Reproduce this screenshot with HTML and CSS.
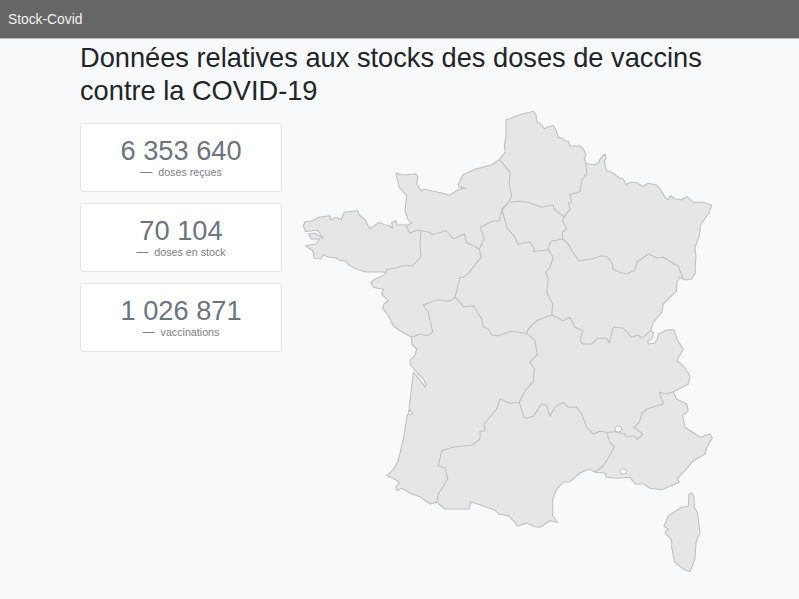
FILE: index.html
```html
<!DOCTYPE html>
<html lang="fr">
<head>
<meta charset="utf-8">
<title>Stock-Covid</title>
<link rel="stylesheet" href="styles.css">
</head>
<body>
<nav class="navbar"><span class="brand">Stock-Covid</span></nav>
<main class="main">
  <h1 class="title">Données relatives aux stocks des doses de vaccins contre la COVID-19</h1>
  <div class="content">
    <section class="stats">
      <div class="card"><div class="value">6 353 640</div><div class="label"><span class="dash">—</span>doses reçues</div></div>
      <div class="card"><div class="value">70 104</div><div class="label"><span class="dash">—</span>doses en stock</div></div>
      <div class="card card-last"><div class="value">1 026 871</div><div class="label"><span class="dash">—</span>vaccinations</div></div>
    </section>
    <svg class="map" viewBox="300 108 416 468" width="416" height="468" role="img" aria-label="Carte de France">
      <path class="land" d="M506 121L520 115.7L533.3 112.3L535.7 115L537.3 123.3L541.7 125.7L544.3 129.7L548.3 127.7L553.3 126.7L556 131L558.3 138.3L562.3 139.3L565 141.7L568.3 142.3L570 147L580 147L583.3 150L586 155L584.3 160L586 164.3L593.3 166L598.3 164.3L601 158.3L605 155L606 158.3L604.3 163.3L606.7 171.7L611.7 173.3L619.3 179L623.3 180L626 185.7L630.7 183.3L635.7 183.3L643.3 187.3L648.3 184.3L656.7 186L660 190L665 198.3L668.3 200.7L670.7 196.7L675 200L681.7 200.7L686.7 197.7L693.3 203.3L703.3 203.3L711.7 206L709.3 213.3L700.7 225.7L699.3 236.7L695 248.3L696 258.3L695 268.3L695.7 273.3L691.7 280L685 281L680 278.3L676.7 283.3L676.7 291.7L663.3 305L661.7 313.3L653.3 323.3L650.7 331.7L653.3 333.3L652.7 338.3L647.7 342.7L648.3 345L655 344L657.3 340L658.3 335L666.7 331L674 330.7L676.7 340L683.3 350L676.7 361.7L683.3 366.7L690 377.3L688.3 385L673.3 392.7L676.7 400L686.7 405L688.3 411.7L682.7 416.7L685 428.3L700 438.3L710 435L712.3 439.3L706.7 448.3L705 455L693.3 461.7L685 471.7L677.3 479.3L679.3 483.3L661.7 490.7L650 489.3L643.3 485L635 485L630 478.3L616.7 479.3L606.7 478.3L605 474L595 473.3L589.3 470L580 474L570 482.7L563.3 483.3L556.7 490L552.7 500L552.7 516.7L557.3 523.3L550 521.7L540 528.3L535 527.7L526.7 524L517.3 527.3L515 523.3L508.3 516.7L498.3 515L495 511L486.7 508.3L470.7 502.7L469.3 510L456 510L445 510L436.7 503.3L430 505L420 497.7L411.7 495L401.7 489.3L397.3 491.7L396 488.3L399.3 483.3L393.3 479.3L386.7 476.7L393.3 470.7L398.3 461.7L403.3 440L407.3 415.7L413 415L410 410.7L408.6 414L413.3 373.3L421.7 383.3L425 388.3L426 385L423.3 380L415 371.7L410 365L410 361.7L415 356L416.7 350L411.7 345L411.7 338.3L400 331.7L393.3 326.7L388.3 316.7L382.7 309.3L384 305L388.3 301.7L381.7 295L383.3 290L378.3 289.3L373.3 288.3L370.7 284L375 280L383.3 276.7L386 273L366 273L359.3 271L352.7 268.3L347.7 265L345.3 261.7L341 261.7L336 259L329.3 258.3L322.7 255.7L321 260L314.3 259.3L312.7 251.7L305.3 246.7L316 245L320 240L311 240L308.7 235L315.3 234.3L323.3 239.3L317.7 231L305.3 232.7L303.3 226.7L305.3 222.7L312.7 221.7L318.7 218.3L330 216.7L331 221L336 218.3L341 220.7L344.3 213.3L352.7 212.3L357.7 211.7L359.3 216L364.3 220L370 230L379.3 223.3L384.3 225.7L389.3 226.7L392.7 229.3L391.7 223.3L396 221.7L397 226L407.7 225.7L411.7 224.3L407.7 220L405 211.7L406.7 196.7L399.3 188.3L396 174L402.7 176L416 175L417.7 177.7L416.7 185L421 191.7L424.3 190.3L442.7 194.3L449.3 196.3L459.3 190L466 189.3L459.3 187.7L458.3 185L462.7 176L476 170L491 166L499.3 160.7L505.3 153.3L504.3 146.7L506 138.3Z"/>
      <path class="land" d="M689 495L691.7 494L694 498.3L694.3 508.3L697.3 513.3L700 533.3L696 543.3L695 560L690 572.7L683.3 570L675 563.3L673.3 556.7L671.7 548.3L671.7 541.7L665 533.3L668.3 530L664 527.3L668.3 516.7L681.7 508.3L688.3 507.3Z"/>
      <path class="border" d="M500 161L510 173.3L509.3 185L511.7 198.3L507.3 205L501.7 210L503.3 215L506.7 228.3L515 238.3L518.3 245.7L525 243.3L530 243.3L534.3 250L533.3 252.7L548.3 250.7L550.7 242.3L562.7 240L562.3 233.3L566.7 230L562.3 221.7L564.3 217.7L555 211L552.7 205.7L541.7 208.3L528.3 203.3L518.3 202.3L510 203.3"/>
      <path class="border" d="M564.3 217.7L570 210L568.3 204.3L571.7 203.3L570 195.7L580 192.7L581.7 181L586.7 174.3L586 164.3"/>
      <path class="border" d="M562.7 240L568.3 245L571.7 251.7L579 261.7L591.7 260L601.7 256.7L606.7 257.7L612.7 265L612.7 270L621.7 274L626.7 275L635 271L636.7 263.3L648.3 255L656.7 259L663.3 258.3L678.3 267.3L680 272L683.3 279.5"/>
      <path class="border" d="M406 226.7L410 234L417.7 231L429.3 233.3L432.7 235.7L446 231.7L453.3 240L464.3 235L466.7 243.3L479.3 250L484.3 240L480.3 228.3L492.7 222.3L499.3 221.7L501.7 211.7L507.3 205"/>
      <path class="border" d="M421 231.7L420 245L421 257.7L412.7 266.7L402.7 266.7L396 269L386.7 270.7L386 274.3"/>
      <path class="border" d="M479.3 250L481 258.3L469.3 273.3L463.3 278.3L460 278.3L455 298.3L449.3 302.3L436.7 300.7L423.3 306L428.3 313.3L432.7 333.3L426.7 336.7L420 335L411.7 338.3"/>
      <path class="border" d="M455 298.3L461.7 305L463.3 307.7L473.3 306.7L481.7 320L483.3 328.3L488.3 330L491.7 335.7L498.3 336.7L510 332.3L526.7 334.3L528.3 330L536.7 321.7L551.7 315.7L552.7 305L546.7 293.3L548.3 280L545.7 273.3L550 268.3L553.3 258.3L548.3 250.7"/>
      <path class="border" d="M551.7 315.7L563.3 321.7L570 318.3L575 328.3L582.7 331.7L580 341.7L583.3 345L591.7 345L597.3 339.3L606.7 339.3L609.3 344L613.3 328.3L623.3 329L631.7 338.3L638.3 336L641.7 339.3L650.7 331.7"/>
      <path class="border" d="M526.7 334.3L535 341.7L537.3 356L530 362.7L534.3 370L533.3 382.7L525 391.7L519.3 403.3L510 404.3L500 400L496.7 410L484 425L485 431.7L480 432.3L480 440L472.7 446L455 447.7L441.7 451.7L438.3 466.7L445 469L447.7 480L438.3 495L436.7 503.3"/>
      <path class="border" d="M519.3 403.3L523.3 416.7L525 419.3L533.3 417.3L541.7 404.7L546.7 406.7L550 417.3L555 408.3L563.3 403.3L568.3 408.3L576.7 408.3L581.7 415L586.7 428.3L593.3 435L600 432.3L606.7 433.3L610 443.3L614.3 447.7L606.7 461.7L601.7 468.3L595 473"/>
      <path class="border" d="M606.7 433.3L615 432.7L625 435L626 437.3L635 437.3L637.3 440.7L642.7 435L634 428.3L639.3 423.3L641.7 415L646.7 410L663.3 405L659.3 393.3L666.7 395L673.3 392.7"/>
      <ellipse class="hole" cx="618.3" cy="430" rx="3.5" ry="3"/>
      <ellipse class="hole" cx="623.5" cy="472.5" rx="3.6" ry="2.8"/>
    </svg>
  </div>
</main>
</body>
</html>
```
FILE: styles.css
```css
* { box-sizing: border-box; }
body {
  margin: 0;
  background: #f8f9fa;
  font-family: "Liberation Sans", Arial, sans-serif;
  color: #212529;
}
.navbar {
  height: 39px;
  background: #666;
  border-bottom: 1px solid #bbb;
  padding: 0 8px;
  display: flex;
  align-items: center;
}
.brand { font-size: 13.8px; color: #f2f2f2; }
.main { padding: 2px 0 0 80px; }
.title {
  margin: 0;
  width: 650px;
  font-size: 27.22px;
  line-height: 33px;
  font-weight: 400;
}
.content { display: flex; align-items: flex-start; }
.stats {
  width: 202px;
  margin-top: 16px;
  display: flex;
  flex-direction: column;
  gap: 11px;
}
.card {
  height: 69px;
  background: #fff;
  border: 1px solid #e3e5e7;
  border-radius: 3px;
  padding-top: 12px;
  text-align: center;
  color: #6c757d;
}
.value { font-size: 27.22px; line-height: 32px; margin-top: -1px; }
.label { font-size: 10.7px; line-height: 13px; color: #7a828a; margin-top: -1px; }
.dash { font-size: 12px; margin-right: 6px; }
.map { display: block; margin-left: 18px; flex: none; filter: blur(0.3px); }
.land { fill: #e6e6e6; stroke: #c0c0c0; stroke-width: 1.1; stroke-linejoin: round; }
.border { fill: none; stroke: #c0c0c0; stroke-width: 1.1; stroke-linejoin: round; }
.hole { fill: #f8f9fa; stroke: #c0c0c0; stroke-width: 1; }
```
